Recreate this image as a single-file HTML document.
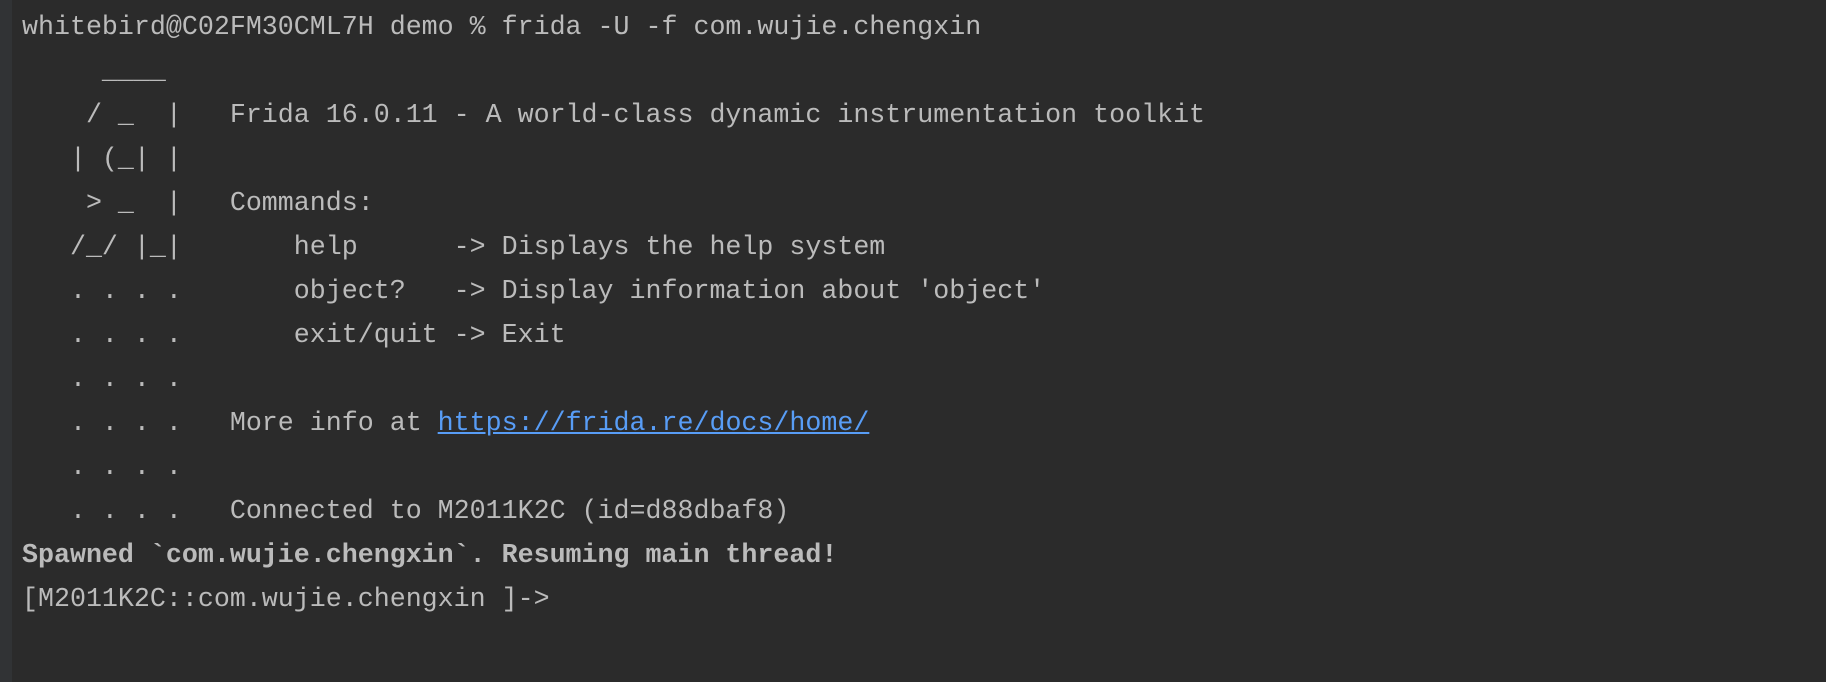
<!DOCTYPE html>
<html><head><meta charset="utf-8"><style>
html,body{margin:0;padding:0;}
body{width:1826px;height:682px;background:#2b2b2b;overflow:hidden;position:relative;}
.g{position:absolute;left:0;top:0;width:12px;height:682px;background:#313335;}
pre{position:absolute;left:22px;top:5.5px;margin:0;font-family:"Liberation Mono",monospace;font-size:26.65px;line-height:44px;color:#bbbbbb;}
a{color:#589df6;text-decoration:underline;}
b{font-weight:bold;}
</style></head><body><div class="g"></div><pre>whitebird@C02FM30CML7H demo % frida -U -f com.wujie.chengxin
     ____
    / _  |   Frida 16.0.11 - A world-class dynamic instrumentation toolkit
   | (_| |
    &gt; _  |   Commands:
   /_/ |_|       help      -&gt; Displays the help system
   . . . .       object?   -&gt; Display information about 'object'
   . . . .       exit/quit -&gt; Exit
   . . . .
   . . . .   More info at <a>https://frida.re/docs/home/</a>
   . . . .
   . . . .   Connected to M2011K2C (id=d88dbaf8)
<b>Spawned `com.wujie.chengxin`. Resuming main thread!</b>
[M2011K2C::com.wujie.chengxin ]-&gt;</pre></body></html>
